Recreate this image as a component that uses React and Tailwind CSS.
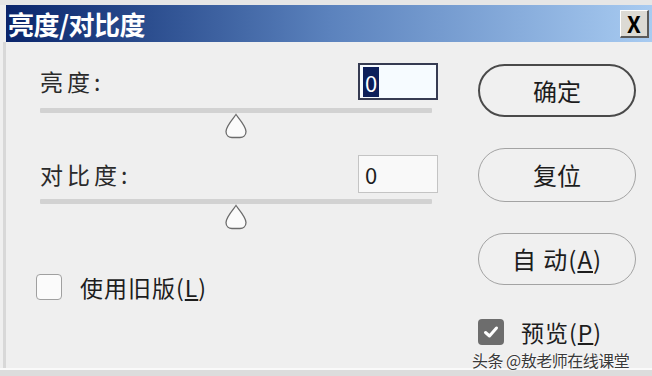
import React from 'react';

const font = { fontFamily: '"Noto Sans CJK SC", "Noto Sans", sans-serif' };

// slider thumb: rounded teardrop pointing up
const Thumb = () => (
  <svg width="26" height="26" viewBox="0 0 26 26" className="block ml-[183px]">
    <path
      d="M13 1.5 C11 4.5 3 13 3 18.5 C3 22.5 6 24.5 9 24.5 L17 24.5 C20 24.5 23 22.5 23 18.5 C23 13 15 4.5 13 1.5 Z"
      fill="#fbfbfb"
      stroke="#6b6b6b"
      strokeWidth="1.3"
    />
  </svg>
);

const Track = ({ top }) => (
  <div className={`${top} h-[5px] w-[392px] bg-[#d2d2d2] rounded-[1px]`} />
);

const PillButton = ({ children, dark, className = '' }) => (
  <button
    className={`w-[158px] rounded-full flex items-center justify-center text-[24px] text-[#1d1d1d] bg-[#f0f0f0] ${
      dark ? 'border-2 border-[#4a4a4a]' : 'border-[1.5px] border-[#a3a3a3]'
    } ${className}`}
  >
    {children}
  </button>
);

export default function App() {
  return (
    <div
      className="w-[652px] h-[376px] bg-[#efefef] flex flex-col overflow-hidden relative"
      style={font}
    >
      {/* window top edge */}
      <div className="h-[5px] bg-[#e6e6e6] shrink-0" />

      {/* title bar */}
      <div className="ml-[6px] h-[37px] shrink-0 flex items-center bg-gradient-to-r from-[#0b256b] via-[#5b82bd] to-[#a8cbf1]">
        <span className="pl-[2px] text-[26px] font-bold text-white leading-none tracking-[-0.5px]">
          亮度/对比度
        </span>
        <div className="ml-auto mr-[3px] w-[29px] h-[28px] bg-[#dcdad4] border-t border-l border-white border-r-2 border-b-2 border-r-[#5a5a5a] border-b-[#5a5a5a] flex items-center justify-center">
          <span className="text-[22px] font-bold leading-none text-black">X</span>
        </div>
      </div>

      {/* body */}
      <div className="flex-1 ml-[3px] border-l-[3px] border-[#d8d8d8] flex">
        {/* left column */}
        <div className="ml-[34px] w-[398px] flex flex-col pt-[21px]">
          <div className="flex items-center justify-between h-[37px]">
            <span className="text-[23px] tracking-[4px] text-[#2a2a2a] leading-none">亮度:</span>
            <div className="w-[80px] h-[37px] border-2 border-[#363b52] bg-[#f6fbff] flex items-center pl-[3px]">
              <span className="bg-[#0d1f5a] text-white text-[22px] leading-[30px] px-[2px]">0</span>
            </div>
          </div>
          <Track top="mt-[8px]" />
          <Thumb />

          <div className="flex items-center justify-between h-[38px] mt-[16px]">
            <span className="text-[23px] tracking-[4px] text-[#2a2a2a] leading-none">对比度:</span>
            <div className="w-[80px] h-[38px] border border-[#c4c4c4] bg-[#f9f9f9] flex items-center pl-[6px]">
              <span className="text-[#1d1d1d] text-[22px] leading-none">0</span>
            </div>
          </div>
          <Track top="mt-[6px]" />
          <Thumb />

          <div className="flex items-center mt-[44px] ml-[-4px]">
            <div className="w-[26px] h-[26px] rounded-[4px] border border-[#a0a0a0] bg-[#fbfbfb]" />
            <span className="ml-[18px] text-[23px] text-[#1d1d1d] tracking-[1px] leading-none">
              使用旧版(<span className="underline underline-offset-2">L</span>)
            </span>
          </div>
        </div>

        {/* right column */}
        <div className="ml-[40px] flex flex-col pt-[22px]">
          <PillButton dark className="h-[53px]">确定</PillButton>
          <PillButton className="h-[54px] mt-[31px]">复位</PillButton>
          <PillButton className="h-[52px] mt-[31px]">
            <span className="tracking-[1px]">
              自 动(<span className="underline underline-offset-2">A</span>)
            </span>
          </PillButton>

          <div className="flex items-center mt-[34px]">
            <div className="w-[26px] h-[26px] rounded-[4px] bg-[#6d6d6d] flex items-center justify-center">
              <svg width="18" height="18" viewBox="0 0 18 18">
                <path d="M3.5 9.5 L7.5 13 L14.5 5" fill="none" stroke="#fff" strokeWidth="3" strokeLinecap="round" strokeLinejoin="round" />
              </svg>
            </div>
            <span className="ml-[17px] text-[23px] text-[#1d1d1d] tracking-[1px] leading-none">
              预览(<span className="underline underline-offset-1">P</span>)
            </span>
          </div>
        </div>
      </div>

      {/* bottom frame edge */}
      <div className="h-[8px] shrink-0 border-t-2 border-[#fafafa] bg-[#dcdcdc]" />

      {/* watermark */}
      <div
        className="absolute left-[472px] top-[352px] text-[16px] leading-none text-[#3a3a3a] tracking-[-0.5px]"
        style={{ textShadow: '0 0 2px #fff, 0 0 2px #fff' }}
      >
        头条 @敖老师在线课堂
      </div>
    </div>
  );
}
